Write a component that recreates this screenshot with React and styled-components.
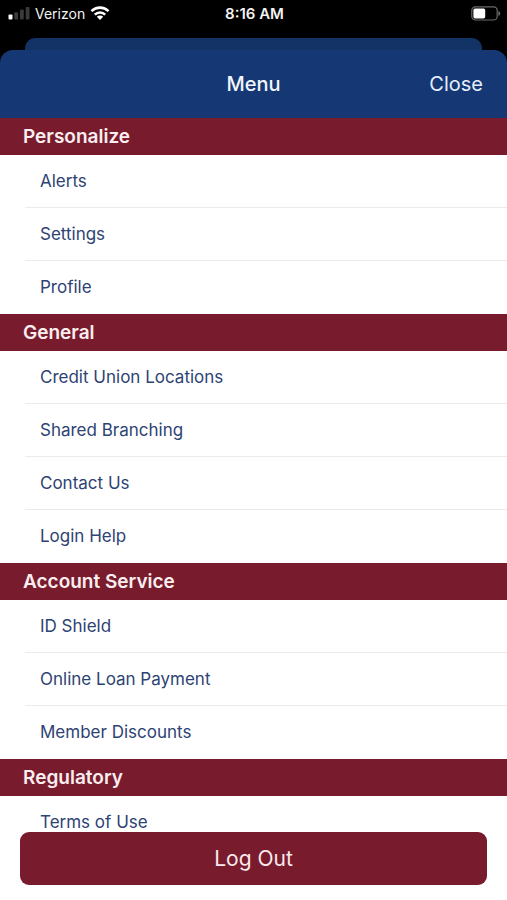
import styled, { createGlobalStyle } from "styled-components";

const sections = [
  { title: "Personalize", items: ["Alerts", "Settings", "Profile"] },
  {
    title: "General",
    items: [
      "Credit Union Locations",
      "Shared Branching",
      "Contact Us",
      "Login Help",
    ],
  },
  {
    title: "Account Service",
    items: ["ID Shield", "Online Loan Payment", "Member Discounts"],
  },
  { title: "Regulatory", items: ["Terms of Use"] },
];

export default function App() {
  return (
    <Screen>
      <GlobalStyle />
      <StatusBar>
        <Carrier>
          <SignalIcon />
          <span>Verizon</span>
          <WifiIcon />
        </Carrier>
        <Time>8:16 AM</Time>
        <BatteryIcon />
      </StatusBar>
      <BackSheet />
      <Sheet>
        <Header>
          <h1>Menu</h1>
          <CloseButton type="button">Close</CloseButton>
        </Header>
        <Menu>
          {sections.map((section) => (
            <section key={section.title}>
              <SectionTitle>{section.title}</SectionTitle>
              <Items>
                {section.items.map((item) => (
                  <Item key={item}>
                    <ItemLink href="#">{item}</ItemLink>
                  </Item>
                ))}
              </Items>
            </section>
          ))}
        </Menu>
        <Footer>
          <LogOutButton type="button">Log Out</LogOutButton>
        </Footer>
      </Sheet>
    </Screen>
  );
}

function SignalIcon() {
  return (
    <svg width="22" height="14" viewBox="0 0 22 14" aria-hidden="true">
      <rect x="0.5" y="8.5" width="4" height="5" rx="1" fill="#fff" />
      <rect x="6.3" y="6.2" width="3.8" height="7.3" rx="1" fill="#3a3a3a" />
      <rect x="12" y="3.6" width="3.8" height="9.9" rx="1" fill="#3a3a3a" />
      <rect x="17.7" y="1" width="3.8" height="12.5" rx="1" fill="#3a3a3a" />
    </svg>
  );
}

function WifiIcon() {
  return (
    <svg width="20" height="14" viewBox="0 0 20 14" aria-hidden="true">
      <g fill="none" stroke="#fff" strokeWidth="2.6">
        <path d="M1.5 5.1a12.2 12.2 0 0 1 17 0" />
        <path d="M4.8 8.6a7.4 7.4 0 0 1 10.4 0" />
      </g>
      <path d="M10 14L6.8 10.8a4.5 4.5 0 0 1 6.4 0z" fill="#fff" />
    </svg>
  );
}

function BatteryIcon() {
  return (
    <svg width="30" height="15" viewBox="0 0 30 15" aria-hidden="true">
      <rect
        x="0.8"
        y="0.8"
        width="25.4"
        height="13.2"
        rx="3.6"
        fill="none"
        stroke="#6b6b6b"
        strokeWidth="1.2"
      />
      <rect x="2.4" y="2.4" width="11.8" height="10" rx="1.6" fill="#fff" />
      <path d="M27.4 5a2.6 2.6 0 0 1 0 5z" fill="#6b6b6b" />
    </svg>
  );
}

const GlobalStyle = createGlobalStyle`
  * {
    box-sizing: border-box;
  }
  body {
    margin: 0;
    background-color: #000000;
    font-family: Inter, "Liberation Sans", sans-serif;
  }
  h1, h2, ul {
    margin: 0;
    padding: 0;
  }
  button {
    font-family: inherit;
    cursor: pointer;
  }
`;
const Screen = styled.div`
  display: flex;
  flex-direction: column;
  width: 100%;
  height: 100vh;
`;
const StatusBar = styled.div`
  display: grid;
  grid-template-columns: 1fr auto 1fr;
  align-items: center;
  height: 38px;
  padding: 0 6px 12px 8px;
  color: #f2f2f2;
  font-size: 14px;
  flex-shrink: 0;
  > svg {
    justify-self: end;
  }
`;
const Carrier = styled.div`
  display: flex;
  align-items: center;
  gap: 5px;
`;
const Time = styled.span`
  font-size: 15px;
  font-weight: 600;
`;
const BackSheet = styled.div`
  height: 12px;
  margin: 0 25px;
  background-color: #133266;
  border-radius: 10px 10px 0 0;
  flex-shrink: 0;
`;
const Sheet = styled.main`
  display: flex;
  flex-direction: column;
  flex: 1;
  min-height: 0;
`;
const Header = styled.header`
  display: grid;
  grid-template-columns: 1fr auto 1fr;
  align-items: center;
  height: 68px;
  padding: 0 24px;
  background-color: #153874;
  border-radius: 13px 13px 0 0;
  color: #f1f5fd;
  flex-shrink: 0;
  h1 {
    grid-column: 2;
    font-size: 20px;
    font-weight: 500;
  }
`;
const CloseButton = styled.button`
  justify-self: end;
  padding: 0;
  border: none;
  background: none;
  color: #e4eefb;
  font-size: 20px;
`;
const Menu = styled.nav`
  flex: 1;
  min-height: 0;
  overflow-y: auto;
  scrollbar-width: none;
  background-color: #ffffff;
`;
const SectionTitle = styled.h2`
  display: flex;
  align-items: center;
  height: 37px;
  padding: 0 23px;
  background-color: #781b2d;
  color: #fbeef0;
  font-size: 19px;
  font-weight: 600;
`;
const Items = styled.ul`
  list-style: none;
`;
const Item = styled.li`
  height: 53px;
  margin-left: 25px;
  border-bottom: 1px solid #ebebeb;
  &:last-child {
    border-bottom-color: transparent;
  }
`;
const ItemLink = styled.a`
  display: flex;
  align-items: center;
  height: 100%;
  padding-left: 15px;
  color: #2d4373;
  font-size: 17px;
  text-decoration: none;
`;
const Footer = styled.footer`
  padding: 0 20px 15px;
  background-color: #ffffff;
  flex-shrink: 0;
`;
const LogOutButton = styled.button`
  width: 100%;
  height: 53px;
  border: none;
  border-radius: 9px;
  background-color: #781b2d;
  color: #fbe9ec;
  font-size: 21px;
`;
